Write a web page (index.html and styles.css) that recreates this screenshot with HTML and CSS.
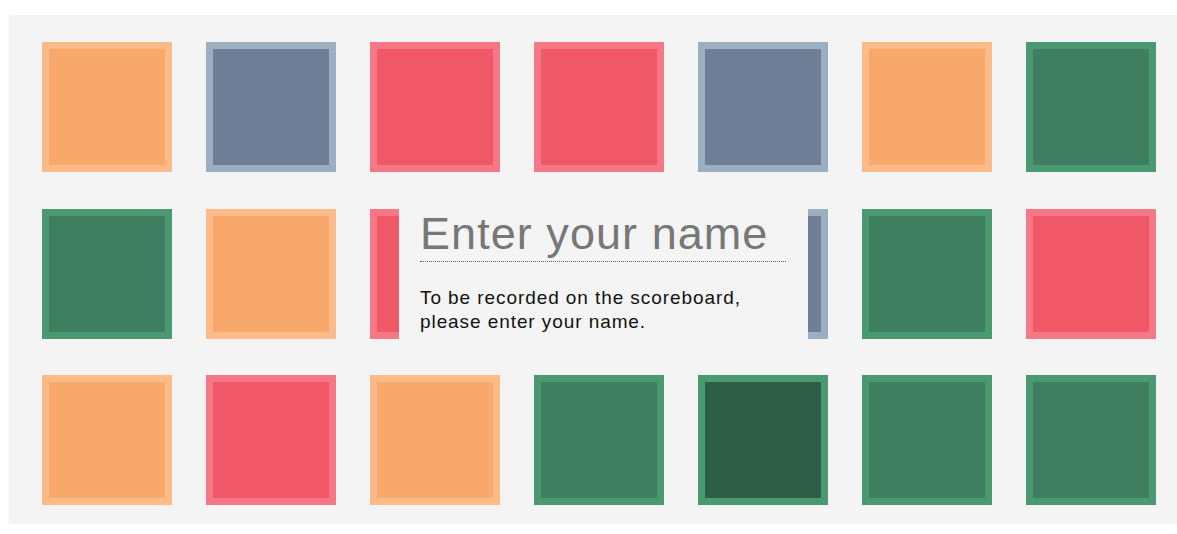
FILE: index.html
```html
<!DOCTYPE html>
<html lang="en">
<head>
<meta charset="utf-8">
<title>Scoreboard</title>
<link rel="stylesheet" href="styles.css">
</head>
<body>
<main class="board">
  <div class="grid">
    <div class="tile orange"></div>
    <div class="tile blue"></div>
    <div class="tile red"></div>
    <div class="tile red"></div>
    <div class="tile blue"></div>
    <div class="tile orange"></div>
    <div class="tile green"></div>

    <div class="tile green"></div>
    <div class="tile orange"></div>
    <div class="tile red"></div>
    <div class="tile orange"></div>
    <div class="tile blue"></div>
    <div class="tile green"></div>
    <div class="tile red"></div>

    <div class="tile orange"></div>
    <div class="tile red"></div>
    <div class="tile orange"></div>
    <div class="tile green"></div>
    <div class="tile dark"></div>
    <div class="tile green"></div>
    <div class="tile green"></div>
  </div>

  <form class="dialog">
    <input class="name-input" type="text" placeholder="Enter your name">
    <p class="hint">To be recorded on the scoreboard,<br>please enter your name.</p>
  </form>
</main>
</body>
</html>
```

FILE: styles.css
```css
html, body {
  margin: 0;
  padding: 0;
  background: #ffffff;
}

body {
  font-family: "Liberation Sans", Arial, sans-serif;
}

.board {
  position: relative;
  margin: 15px 0 0 9px;
  width: 1168px;
  height: 509px;
  background: #f4f4f4;
  box-sizing: border-box;
  padding: 27px 21px 0 33px;
}

.grid {
  display: grid;
  grid-template-columns: repeat(7, 130px);
  grid-auto-rows: 130px;
  column-gap: 34px;
  row-gap: 36.5px;
}

.tile {
  box-sizing: border-box;
  border: 7px solid;
}

.orange { border-color: #fcbb88; background: #f7a86a; }
.blue   { border-color: #9aafbf; background: #6e7f97; }
.red    { border-color: #f67887; background: #f05867; }
.green  { border-color: #4b9970; background: #3f7f61; }
.dark   { border-color: #4b9970; background: #2e5e48; }

.dialog {
  position: absolute;
  left: 390px;
  top: 192px;
  width: 409px;
  box-sizing: border-box;
  padding: 0 22px 14px 21px;
  background: #f4f4f4;
  margin: 0;
}

.name-input {
  display: block;
  width: 100%;
  height: 55px;
  box-sizing: border-box;
  margin: 0;
  padding: 0 0 1px 0;
  border: none;
  border-bottom: 1px dotted #666666;
  background: transparent;
  outline: none;
  font-family: "Liberation Sans", Arial, sans-serif;
  font-size: 45px;
  letter-spacing: 1.05px;
  color: #333;
}

.name-input::placeholder {
  color: #777777;
  opacity: 1;
}

.hint {
  margin: 24px 0 0 0;
  font-size: 19px;
  line-height: 24px;
  letter-spacing: 0.92px;
  color: #111;
}
```
